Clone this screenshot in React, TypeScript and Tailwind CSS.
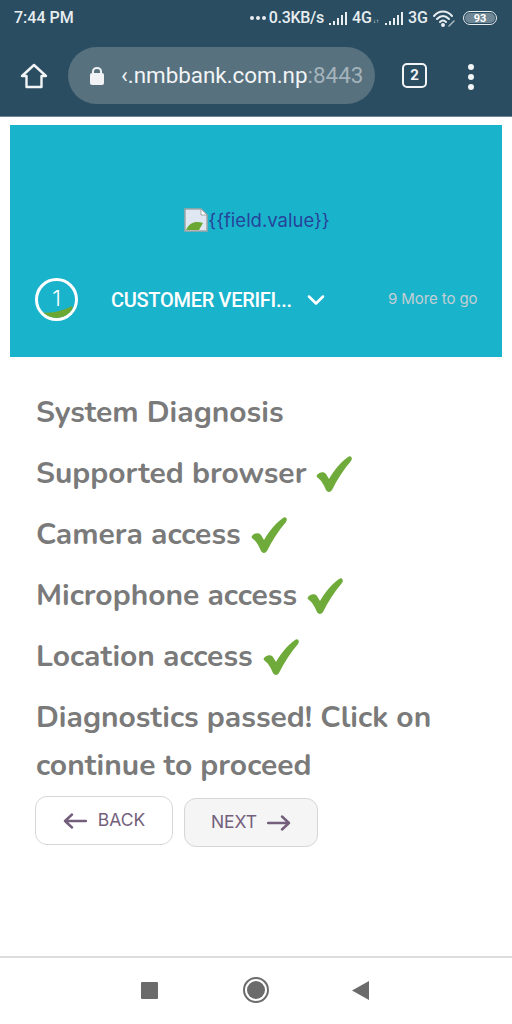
import { ChevronDown } from "lucide-react";

const checks = ["Supported browser", "Camera access", "Microphone access", "Location access"];

function Check() {
  return (
    <svg width="36" height="36" viewBox="0 0 36 36" className="ml-[10px] shrink-0">
      <path d="M1 19 C3 16 8 15 10 18 L13 23 C18 14 25 6 32 1 C35 -1 37 2 35 5 C27 14 21 24 16 34 C14 37 11 36 10 34 C8 29 5 24 2 22 C1 21 0 20 1 19 Z" fill="#6fab3a" />
    </svg>
  );
}

function Signal() {
  return (
    <svg width="20" height="13" viewBox="0 0 20 13" className="shrink-0" fill="#e8edf0">
      <rect x="1" y="11" width="2" height="2" />
      <rect x="5" y="9" width="2" height="4" />
      <rect x="9" y="6" width="2" height="7" />
      <rect x="13" y="3" width="2" height="10" />
      <rect x="17" y="0" width="2" height="13" />
    </svg>
  );
}

function Arrow({ flip }: { flip?: boolean }) {
  return (
    <svg width="24" height="16" viewBox="0 0 24 16" fill="none" stroke="currentColor" strokeWidth="2.4" strokeLinecap="round" strokeLinejoin="round" className={flip ? "shrink-0 rotate-180" : "shrink-0"}>
      <path d="M23 8 H2 M9 1.5 L2 8 L9 14.5" />
    </svg>
  );
}

export default function App() {
  return (
    <div className="flex h-[1024px] w-[512px] flex-col overflow-hidden bg-white font-['Noto_Sans',sans-serif]">
      {/* Status bar */}
      <div className="flex h-[36px] items-center justify-between bg-[#2a4d62] pl-[14px] pr-[15px] font-['Roboto',sans-serif] text-[16px] font-medium text-[#e8edf0]">
        <span>7:44 PM</span>
        <div className="flex items-center">
          <span className="flex gap-[2px]">
            <span className="h-[4px] w-[4px] rounded-full bg-[#e8edf0]" />
            <span className="h-[4px] w-[4px] rounded-full bg-[#e8edf0]" />
            <span className="h-[4px] w-[4px] rounded-full bg-[#e8edf0]" />
          </span>
          <span className="ml-[3px] tracking-[-0.3px]">0.3KB/s</span>
          <span className="ml-[4px]"><Signal /></span>
          <span className="ml-[4px]">4G</span>
          <span className="ml-[1px] mr-[5px] mt-[6px] text-[6px] leading-none">↓↑</span>
          <Signal />
          <span className="ml-[4px]">3G</span>
          <svg width="24" height="18" viewBox="0 0 24 18" fill="none" stroke="#e8edf0" strokeWidth="2" strokeLinecap="round" className="ml-[4px]">
            <path d="M2 7 C7 1 15 1 20 7" />
            <path d="M5 10 C9 6 13 6 17 10" />
            <path d="M8 13 C10 11 12 11 14 13" />
            <circle cx="11" cy="16" r="1" fill="#e8edf0" />
            <path d="M17 17 L22 12" strokeWidth="1.5" stroke="#a9b8c1" />
          </svg>
          <span className="ml-[7px] flex h-[14px] w-[34px] items-center justify-center rounded-full border border-[#e8edf0] text-[11px] font-bold leading-none">
            <span className="flex h-[10px] w-[30px] items-center justify-center rounded-full bg-[#6f8794] text-white">93</span>
          </span>
        </div>
      </div>

      {/* Browser toolbar */}
      <div className="flex h-[81px] items-start border-b border-[#6d8796] bg-[#2a4d62] pt-[11px]">
        <div className="flex h-[57px] w-[68px] items-center justify-center">
          <svg width="28" height="28" viewBox="0 0 28 28" fill="none" stroke="#f2f4f5" strokeWidth="2.4" strokeLinejoin="round">
            <path d="M2 14 L14 3 L26 14 H21.5 V25 H6.5 V14 Z" />
          </svg>
        </div>
        <div className="flex h-[57px] w-[307px] items-center overflow-hidden rounded-full bg-[#57717f] pl-[21px] font-['Roboto',sans-serif] text-[22.4px]">
          <svg width="16" height="19" viewBox="0 0 16 19" fill="#f0f2f3" className="shrink-0">
            <path d="M3 8 V5.5 C3 2.5 5 1 8 1 C11 1 13 2.5 13 5.5 V8 H11 V5.5 C11 3.8 10 3 8 3 C6 3 5 3.8 5 5.5 V8 Z" />
            <rect x="1" y="7" width="14" height="12" rx="2" />
          </svg>
          <span className="ml-[16px] text-[#f2f4f5]">‹.nmbbank.com.np</span>
          <span className="text-[#a4b3bb]">:8443</span>
        </div>
        <div className="ml-[27px] mt-[16px] flex h-[25px] w-[25px] items-center justify-center rounded-[5px] border-[2.5px] border-[#f2f4f5] font-['Roboto',sans-serif] text-[15px] font-bold text-[#f2f4f5]">
          2
        </div>
        <div className="ml-[41px] mt-[17px] flex flex-col gap-[4px]">
          <span className="h-[6px] w-[6px] rounded-full bg-[#f2f4f5]" />
          <span className="h-[6px] w-[6px] rounded-full bg-[#f2f4f5]" />
          <span className="h-[6px] w-[6px] rounded-full bg-[#f2f4f5]" />
        </div>
      </div>

      {/* Page content */}
      <div className="flex-1 px-[10px] pt-[8px]">
        <div className="flex h-[232px] w-[492px] flex-col bg-[#1ab3cc]">
          <div className="mt-[82px] flex h-[26px] items-center justify-center pl-[2px]">
            <svg width="24" height="24" viewBox="0 0 24 24" className="shrink-0">
              <path d="M1 1 H17 L23 7 V23 H1 Z" fill="#dfe8f2" stroke="#a5a5a5" strokeWidth="1.5" />
              <path d="M17 1 V7 H23 Z" fill="#fff" stroke="#a5a5a5" strokeWidth="1" />
              <path d="M2 22 C6 13 13 13 19 15 L15 22 Z" fill="#6aa833" />
            </svg>
            <span className="font-['Inter',sans-serif] text-[18.5px] leading-none text-[#25449a]">{"{{field.value}"}{"}"}</span>
          </div>

          <div className="mt-[45px] flex items-center pl-[25px]">
            <div className="relative flex h-[43px] w-[43px] shrink-0 items-center justify-center overflow-hidden rounded-full border-[3px] border-white font-['Inter',sans-serif] text-[22px] text-white">
              <span className="-mt-[2px] font-light">1</span>
              <svg width="38" height="14" viewBox="0 0 38 14" className="absolute bottom-0 left-0">
                <path d="M2 8 C12 10 22 8 34 2 L38 14 H2 Z" fill="#6aa833" />
              </svg>
            </div>
            <span className="ml-[33px] w-[183px] shrink-0 font-['Roboto',sans-serif] text-[20px] font-medium tracking-[-0.3px] text-white">CUSTOMER VERIFI...</span>
            <ChevronDown size={28} strokeWidth={2.2} className="ml-[8px] shrink-0 text-white" />
            <span className="ml-[58px] whitespace-nowrap font-['Inter',sans-serif] text-[15px] tracking-[-0.1px] text-[#c3cfd3]">9 More to go</span>
          </div>
        </div>

        <div className="pl-[26px] pt-[32px] font-['Nunito','Lato',sans-serif] text-[30px] font-bold leading-[48px] text-[#7a7a7a]">
          <p className="whitespace-nowrap">System Diagnosis</p>
          {checks.map((label) => (
            <p key={label} className="mt-[13px] flex items-center whitespace-nowrap">
              {label}
              <Check />
            </p>
          ))}
          <p className="mt-[13px] w-[430px]">Diagnostics passed! Click on continue to proceed</p>
        </div>

        <div className="ml-[25px] mt-[6px] flex items-start font-['Inter',sans-serif] text-[17.5px] text-[#735f7b]">
          <div className="flex h-[49px] w-[138px] items-center justify-center gap-[11px] rounded-[12px] border-[1.5px] border-[#d6d6d6] bg-white">
            <Arrow />
            <span>BACK</span>
          </div>
          <div className="ml-[11px] mt-[2px] flex h-[49px] w-[134px] items-center justify-center gap-[10px] rounded-[12px] border-[1.5px] border-[#d6d6d6] bg-[#f5f5f5]">
            <span>NEXT</span>
            <Arrow flip />
          </div>
        </div>
      </div>

      {/* Android nav bar */}
      <div className="flex h-[68px] items-center border-t-2 border-[#dcdcdc] bg-white pb-[2px]">
        <div className="ml-[141px] h-[17px] w-[17px] rounded-[1px] bg-[#6b6b6b]" />
        <div className="ml-[85px] flex h-[26px] w-[26px] items-center justify-center rounded-full border-2 border-[#6b6b6b]">
          <div className="h-[18px] w-[18px] rounded-full bg-[#6b6b6b]" />
        </div>
        <svg width="17" height="19" viewBox="0 0 17 19" className="ml-[83px]">
          <path d="M0 9.5 L17 0 V19 Z" fill="#6b6b6b" />
        </svg>
      </div>
    </div>
  );
}
